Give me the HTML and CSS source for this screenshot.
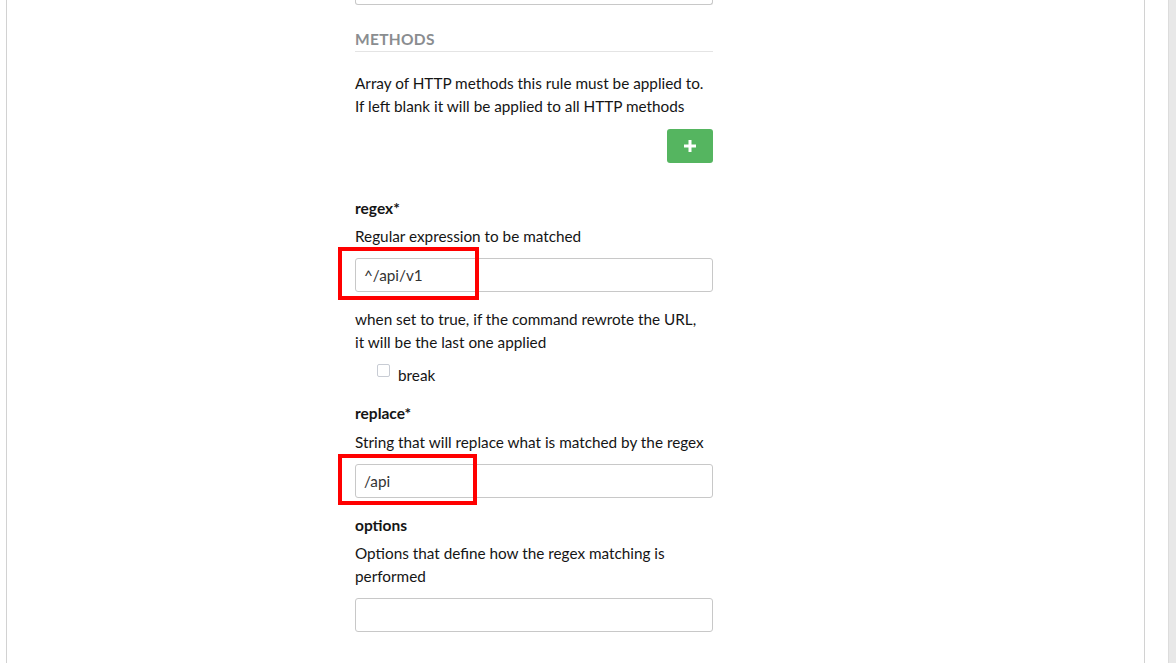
FILE: index.html
```html
<!DOCTYPE html>
<html>
<head>
<meta charset="utf-8">
<link rel="stylesheet" href="styles.css">
</head>
<body>
<div class="page">
  <div class="panel">
    <div class="form">
      <div class="stub"></div>
      <div class="section-title">METHODS</div>
      <p class="desc methods-desc">Array of HTTP methods this rule must be applied to. If left blank it will be applied to all HTTP methods</p>
      <div class="btn-row">
        <button class="add-btn" type="button" aria-label="add">
          <svg width="14" height="14" viewBox="0 0 14 14"><path d="M5.5 1h3v4.5H13v3H8.5V13h-3V8.5H1v-3h4.5z" fill="#fff"/></svg>
        </button>
      </div>

      <div class="field field-regex">
        <div class="label">regex*</div>
        <p class="desc">Regular expression to be matched</p>
        <div class="input-wrap">
          <input class="text-input" type="text" value="^/api/v1">
          <span class="highlight hl-1"></span>
        </div>
      </div>

      <div class="field field-break">
        <p class="desc">when set to true, if the command rewrote the URL, it&nbsp;will be the last one applied</p>
        <label class="check">
          <span class="box"></span>
          <span>break</span>
        </label>
      </div>

      <div class="field field-replace">
        <div class="label">replace*</div>
        <p class="desc">String that will replace what is matched by the regex</p>
        <div class="input-wrap">
          <input class="text-input" type="text" value="/api">
          <span class="highlight hl-2"></span>
        </div>
      </div>

      <div class="field field-options">
        <div class="label">options</div>
        <p class="desc">Options that define how the regex matching is performed</p>
        <div class="input-wrap">
          <input class="text-input" type="text" value="">
        </div>
      </div>
    </div>
  </div>
  <div class="scrollbar"></div>
</div>
</body>
</html>
```
FILE: styles.css
```css
* { box-sizing: border-box; }
html, body { margin: 0; padding: 0; height: 100%; background: #fff; }
body {
  font-family: Lato, "Liberation Sans", sans-serif;
  color: #151515;
  font-size: 15.3px;
  overflow: hidden;
}
.page {
  display: flex;
  height: 663px;
}
.panel {
  margin-left: 6px;
  width: 1139px;
  height: 663px;
  border-left: 1px solid #d2d2d2;
  border-right: 1px solid #d2d2d2;
  padding-left: 348px;
}
.scrollbar {
  margin-left: 23px;
  width: 8px;
  height: 663px;
  background: #e8e8e8;
  border-left: 1px solid #dcdcdc;
}
.form {
  width: 358px;
}
.stub {
  height: 5px;
  border: 1px solid #c8c8c8;
  border-top: none;
  border-radius: 0 0 3px 3px;
}
.section-title {
  margin-top: 25px;
  color: #8a8d90;
  font-size: 15.5px;
  font-weight: 700;
  letter-spacing: 0.3px;
  line-height: 18px;
  padding-bottom: 3px;
  border-bottom: 1px solid #e4e4e4;
}
.desc {
  margin: 0;
  line-height: 23px;
  font-size: 15.3px;
}
.methods-desc {
  margin-top: 20px;
}
.btn-row {
  display: flex;
  justify-content: flex-end;
  margin-top: 11px;
}
.add-btn {
  width: 46px;
  height: 34px;
  border: none;
  border-radius: 3px;
  background: #55b560;
  display: flex;
  align-items: center;
  justify-content: center;
  padding: 0;
}
.label {
  font-weight: 700;
  font-size: 15.5px;
  line-height: 20px;
}
.field-regex { margin-top: 35px; }
.field-regex .desc { margin-top: 7px; }
.input-wrap {
  position: relative;
  margin-top: 10px;
}
.text-input {
  display: block;
  width: 100%;
  height: 34px;
  border: 1px solid #c8c8c8;
  border-radius: 3px;
  padding: 0 8px;
  font-family: inherit;
  font-size: 15.3px;
  color: #333;
  background: #fff;
  outline: none;
}
.highlight {
  position: absolute;
  border: 4px solid #f00;
  pointer-events: none;
}
.hl-1 { left: -17px; top: -11px; width: 141px; height: 53px; }
.hl-2 { left: -17px; top: -10px; width: 139px; height: 51px; }

.field-break { margin-top: 16px; }
.check {
  display: flex;
  align-items: center;
  gap: 8px;
  margin-top: 11px;
  padding-left: 22px;
  line-height: 20px;
}
.box {
  width: 13px;
  height: 13px;
  border: 1px solid #c8ccd4;
  border-radius: 2px;
  margin-top: -9px;
}
.field-replace { margin-top: 18px; }
.field-replace .desc { margin-top: 8px; }
.field-options { margin-top: 17px; }
.field-options .desc { margin-top: 7px; }
```
